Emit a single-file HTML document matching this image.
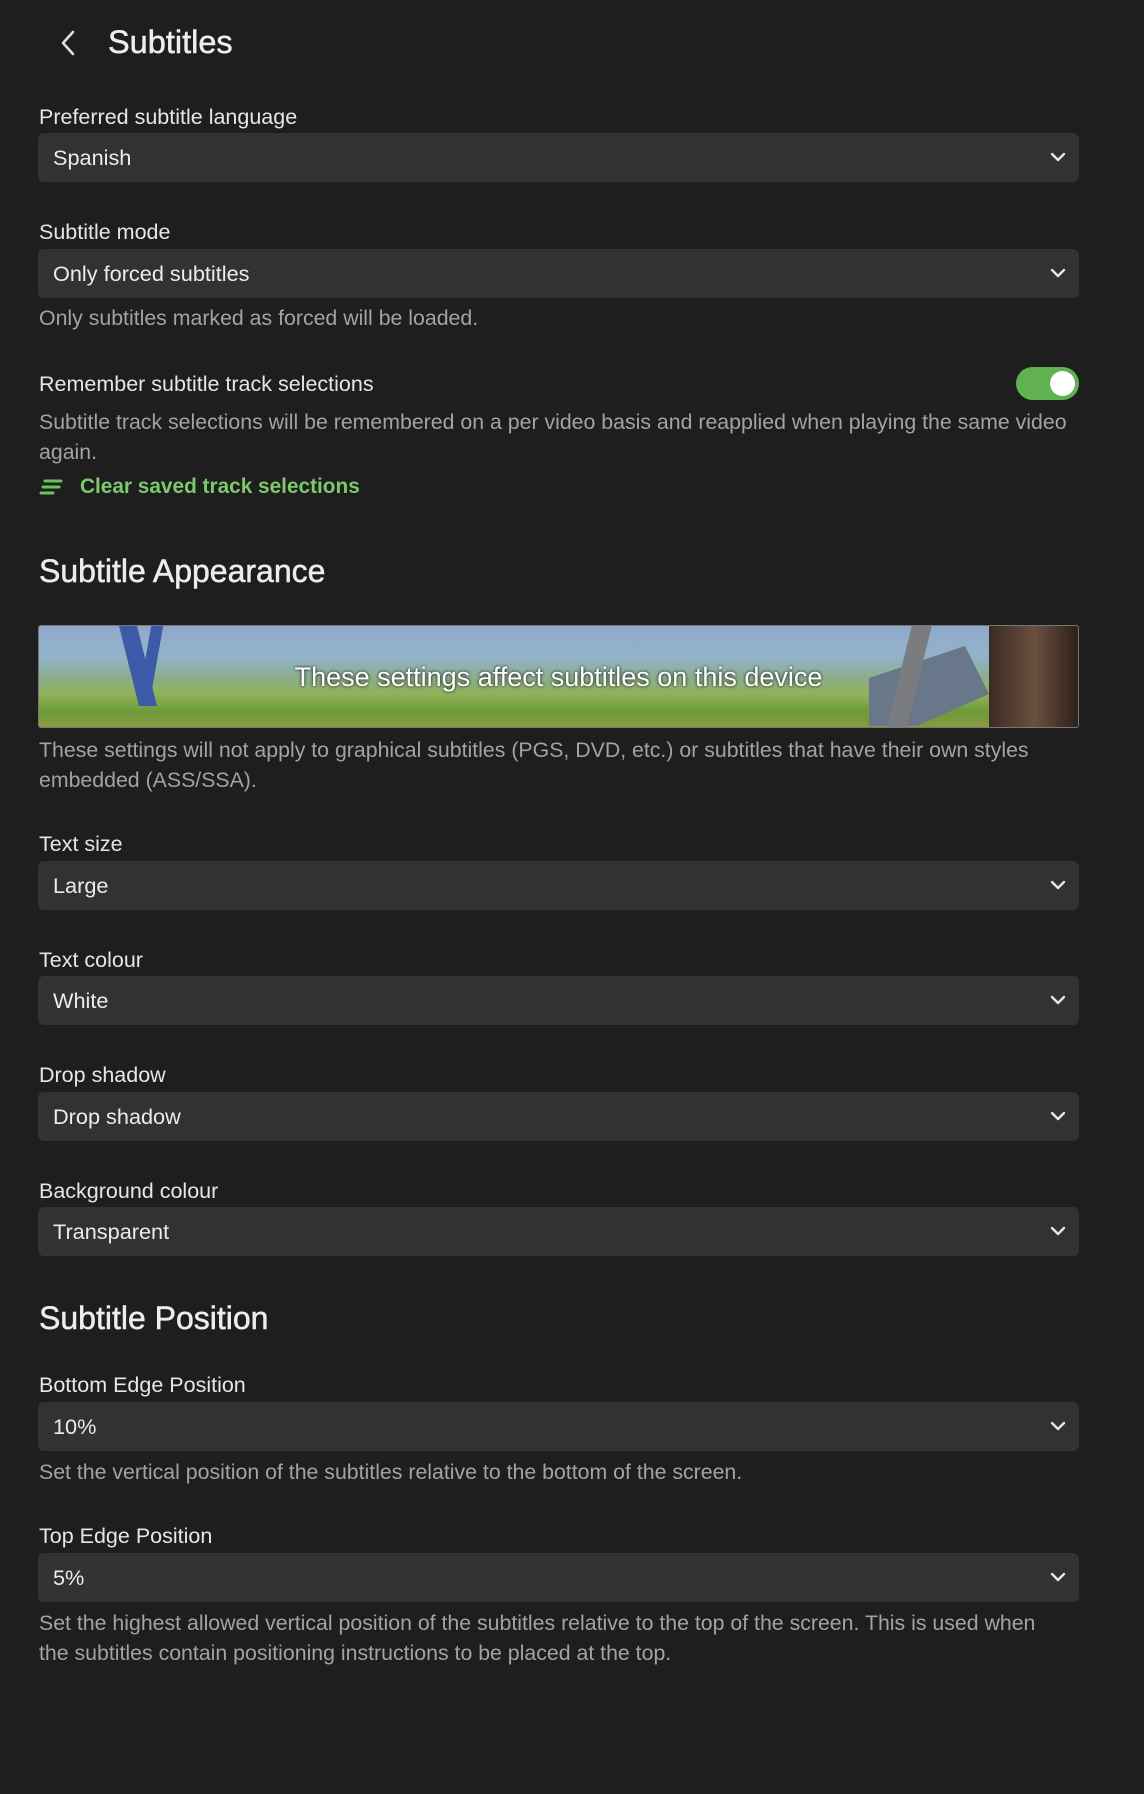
<!DOCTYPE html>
<html><head><meta charset="utf-8"><style>
*{margin:0;padding:0;box-sizing:border-box}
body{width:1144px;height:1794px;background:#1e1e1e;font-family:"Liberation Sans",sans-serif;color:#e6e6e6;position:relative;overflow:hidden}
.a{position:absolute;left:39px;white-space:nowrap}
.lbl{font-size:21.5px;color:#e6e6e6;line-height:24px}
.help{font-size:21.3px;color:#a3a3a3;line-height:30px}
.sel{position:absolute;left:38px;width:1041px;height:49px;background:#323232;border-radius:6px;font-size:21.7px;color:#ececec;padding-left:15px;line-height:50px}
.sel svg{position:absolute;right:13px;top:18px}
h2{font-size:32px;font-weight:normal;color:#ededed;-webkit-text-stroke:0.5px #ededed}
</style></head><body>
<svg style="position:absolute;left:58px;top:30px" width="20" height="26" viewBox="0 0 20 26"><path d="M15 2 L5 13 L15 24" fill="none" stroke="#e0e0e0" stroke-width="2.6" stroke-linecap="round" stroke-linejoin="round"/></svg>
<div class="a" style="left:108px;top:24px;font-size:32.5px;-webkit-text-stroke:0.5px #eee;color:#eee">Subtitles</div>

<div class="a lbl" style="top:105px">Preferred subtitle language</div>
<div class="sel" style="top:133px">Spanish<svg width="16" height="12" viewBox="0 0 16 12"><path d="M2 3 L8 9 L14 3" fill="none" stroke="#e6e6e6" stroke-width="2.4" stroke-linecap="round" stroke-linejoin="round"/></svg></div>

<div class="a lbl" style="top:220px">Subtitle mode</div>
<div class="sel" style="top:249px">Only forced subtitles<svg width="16" height="12" viewBox="0 0 16 12"><path d="M2 3 L8 9 L14 3" fill="none" stroke="#e6e6e6" stroke-width="2.4" stroke-linecap="round" stroke-linejoin="round"/></svg></div>
<div class="a help" style="top:303px">Only subtitles marked as forced will be loaded.</div>

<div class="a lbl" style="top:372px">Remember subtitle track selections</div>
<div style="position:absolute;left:1016px;top:367px;width:63px;height:33px;border-radius:17px;background:#5fb152"><div style="position:absolute;right:4px;top:4px;width:25px;height:25px;border-radius:50%;background:#fff"></div></div>
<div class="a help" style="top:407px">Subtitle track selections will be remembered on a per video basis and reapplied when playing the same video<br>again.</div>
<svg style="position:absolute;left:39px;top:478px" width="24" height="18" viewBox="0 0 24 18"><path d="M6 3 H22 M4 9 H20 M2 15 H14" stroke="#6cc35e" stroke-width="3" stroke-linecap="round"/></svg>
<div class="a" style="left:80px;top:475px;font-size:20.8px;color:#7cc96c;font-weight:bold">Clear saved track selections</div>

<h2 class="a" style="top:553px">Subtitle Appearance</h2>
<div style="position:absolute;left:38px;top:625px;width:1041px;height:103px;border:1px solid #777;border-radius:3px;overflow:hidden;background:linear-gradient(180deg,#8fa8c8 0%,#93b3cc 30%,#8cae8a 52%,#8fb257 68%,#6e9a3a 85%,#8a9a3e 100%)">
<div style="position:absolute;left:90px;top:0;width:18px;height:80px;background:#3d5aa8;transform:skewX(14deg)"></div>
<div style="position:absolute;left:106px;top:0;width:12px;height:70px;background:#3d5aa8;transform:skewX(-10deg)"></div>
<div style="position:absolute;left:830px;top:20px;width:120px;height:80px;background:#68788a;clip-path:polygon(0 40%,80% 0,100% 60%,40% 100%,0 100%)"></div>
<div style="position:absolute;left:950px;top:0;width:91px;height:103px;background:linear-gradient(90deg,#3a2a22,#6b5040,#2a1e18)"></div>
<div style="position:absolute;left:860px;top:0;width:20px;height:103px;background:#7a7c80;transform:skewX(-14deg)"></div>
<div style="position:absolute;left:0;right:0;top:36px;text-align:center;font-size:27px;color:#fff;text-shadow:0 0 3px #000">These settings affect subtitles on this device</div>
</div>
<div class="a help" style="top:735px">These settings will not apply to graphical subtitles (PGS, DVD, etc.) or subtitles that have their own styles<br>embedded (ASS/SSA).</div>

<div class="a lbl" style="top:832px">Text size</div>
<div class="sel" style="top:861px">Large<svg width="16" height="12" viewBox="0 0 16 12"><path d="M2 3 L8 9 L14 3" fill="none" stroke="#e6e6e6" stroke-width="2.4" stroke-linecap="round" stroke-linejoin="round"/></svg></div>
<div class="a lbl" style="top:948px">Text colour</div>
<div class="sel" style="top:976px">White<svg width="16" height="12" viewBox="0 0 16 12"><path d="M2 3 L8 9 L14 3" fill="none" stroke="#e6e6e6" stroke-width="2.4" stroke-linecap="round" stroke-linejoin="round"/></svg></div>
<div class="a lbl" style="top:1063px">Drop shadow</div>
<div class="sel" style="top:1092px">Drop shadow<svg width="16" height="12" viewBox="0 0 16 12"><path d="M2 3 L8 9 L14 3" fill="none" stroke="#e6e6e6" stroke-width="2.4" stroke-linecap="round" stroke-linejoin="round"/></svg></div>
<div class="a lbl" style="top:1179px">Background colour</div>
<div class="sel" style="top:1207px">Transparent<svg width="16" height="12" viewBox="0 0 16 12"><path d="M2 3 L8 9 L14 3" fill="none" stroke="#e6e6e6" stroke-width="2.4" stroke-linecap="round" stroke-linejoin="round"/></svg></div>

<h2 class="a" style="top:1300px">Subtitle Position</h2>
<div class="a lbl" style="top:1373px">Bottom Edge Position</div>
<div class="sel" style="top:1402px">10%<svg width="16" height="12" viewBox="0 0 16 12"><path d="M2 3 L8 9 L14 3" fill="none" stroke="#e6e6e6" stroke-width="2.4" stroke-linecap="round" stroke-linejoin="round"/></svg></div>
<div class="a help" style="top:1457px">Set the vertical position of the subtitles relative to the bottom of the screen.</div>
<div class="a lbl" style="top:1524px">Top Edge Position</div>
<div class="sel" style="top:1553px">5%<svg width="16" height="12" viewBox="0 0 16 12"><path d="M2 3 L8 9 L14 3" fill="none" stroke="#e6e6e6" stroke-width="2.4" stroke-linecap="round" stroke-linejoin="round"/></svg></div>
<div class="a help" style="top:1608px">Set the highest allowed vertical position of the subtitles relative to the top of the screen. This is used when<br>the subtitles contain positioning instructions to be placed at the top.</div>
</body></html>
